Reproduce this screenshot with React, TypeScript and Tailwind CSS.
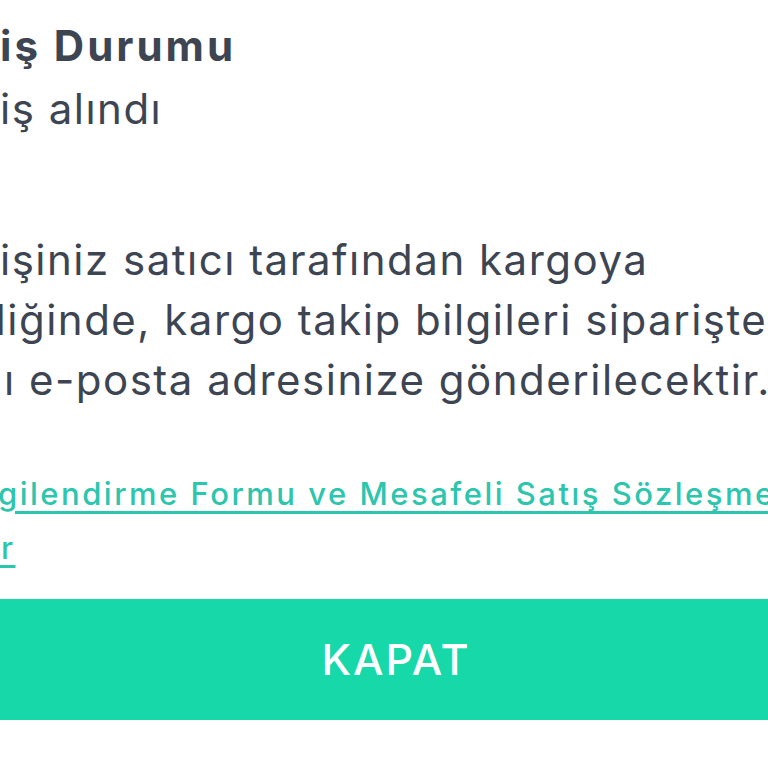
function Line({ cut, text, className = "" }: { cut: string; text: string; className?: string }) {
  // the part before the page edge sits in a zero-width box that spills to the left
  return (
    <div className={`flex whitespace-nowrap ${className}`}>
      <span className="w-0 flex justify-end">{cut}</span>
      <span>{text}</span>
    </div>
  );
}

export default function App() {
  return (
    <div className="w-[768px] h-[768px] overflow-hidden bg-white text-[#3d4553] font-['Inter',sans-serif]">
      <div className="pt-[14px] text-[42px] leading-[63px]">
        <h1 className="font-bold tracking-[3px]">
          <Line cut="Sipar" text="iş Durumu" />
        </h1>
        <Line cut="Sipar" text="iş alındı" className="tracking-[1.5px]" />
      </div>

      <div className="mt-[90px] text-[42px] leading-[60px] tracking-[1.5px]">
        <Line cut="Sipar" text="işiniz satıcı tarafından kargoya" />
        <Line cut="veril" text="diğinde, kargo takip bilgileri siparişte" className="-ml-[20px]" />
        <Line cut="kayıtl" text="ı e-posta adresinize gönderilecektir." className="ml-[4px]" />
      </div>

      <div className="mt-[57px] text-[31px] leading-[54px] font-medium tracking-[2.5px]">
        <a href="#" className="block text-[#2cc5ad] underline decoration-[3px] underline-offset-[6px]">
          <Line cut="Ön Bil" text="gilendirme Formu ve Mesafeli Satış Sözleşmesi" className="-ml-[2px]" />
          <Line cut="Sözleşmele" text="r" className="ml-[1px]" />
        </a>
      </div>

      <div className="-mx-[24px] mt-[24px]">
        <button className="block w-[840px] h-[121px] bg-[#16d8a9] text-white text-[43px] font-medium tracking-[2px]">
          KAPAT
        </button>
      </div>
    </div>
  );
}
